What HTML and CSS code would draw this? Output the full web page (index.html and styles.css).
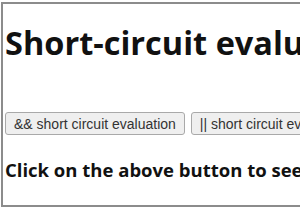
FILE: index.html
```html
<!DOCTYPE html>
<html lang="en">

<head>
  <meta charset="UTF-8" />
  <meta name="viewport" content="width=device-width, initial-scale=1.0" />
  <title>Short-circuit evaluation</title>
  <link rel="stylesheet" href="styles.css">
</head>

<body>
  <div class="page">
    <h1 class="title">Short-circuit evaluation in JavaScript</h1>

    <div class="actions">
      <button class="btn" id="andBtn">&amp;&amp; short circuit evaluation</button>
      <button class="btn" id="orBtn">|| short circuit evaluation</button>
    </div>

    <h3 class="result" id="result">Click on the above button to see the output</h3>
  </div>
</body>

</html>
```

FILE: styles.css
```css
* {
  box-sizing: border-box;
}

body {
  margin: 0;
  background-color: #fff;
  overflow: hidden;
}

.page {
  width: 320px;
  height: 205px;
  margin: 2px 0 0 1px;
  padding: 0 2px;
  border: 2px solid #8c8c8c;
  border-right: none;
  font-family: "Open Sans", sans-serif;
  color: #111;
}

.title {
  margin: 0;
  padding-top: 17px;
  font-size: 32.5px;
  font-weight: 700;
  line-height: 44px;
  white-space: nowrap;
}

.actions {
  display: flex;
  gap: 6px;
  margin-top: 47px;
  white-space: nowrap;
}

.btn {
  flex: none;
  height: 23px;
  padding: 0 8px;
  background-color: #efefef;
  border: 1px solid #a9a9a9;
  border-radius: 3px;
  color: #333;
  font-family: "Liberation Sans", Arial, sans-serif;
  font-size: 14px;
}

.result {
  margin: 0;
  margin-top: 22px;
  font-size: 18.5px;
  font-weight: 700;
  white-space: nowrap;
}
```
